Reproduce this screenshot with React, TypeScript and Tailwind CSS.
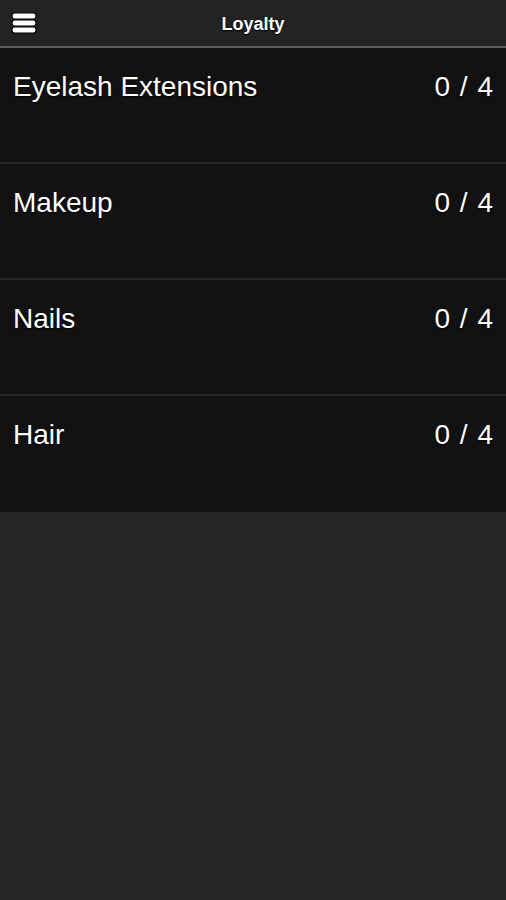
import React from 'react';

interface LoyaltyItem {
  name: string;
  count: number;
  total: number;
}

const items: LoyaltyItem[] = [
  { name: 'Eyelash Extensions', count: 0, total: 4 },
  { name: 'Makeup', count: 0, total: 4 },
  { name: 'Nails', count: 0, total: 4 },
  { name: 'Hair', count: 0, total: 4 },
];

const MenuIcon: React.FC = () => (
  <svg width="26" height="22" viewBox="0 0 26 22">
    {[1, 8, 15].map((y) => (
      <rect key={y} x="1" y={y} width="24" height="6" rx="2.5" fill="#fff" stroke="#000" strokeWidth="1.2" />
    ))}
  </svg>
);

const App: React.FC = () => {
  return (
    <div className="min-h-screen bg-[#252525] font-['Liberation_Sans',Arial,sans-serif] text-white">
      <header className="relative flex h-[48px] items-center justify-center border-b-2 border-[#5e5e5e] bg-[#232323]">
        <button className="absolute left-[11px] top-[12px]">
          <MenuIcon />
        </button>
        <h1 className="mt-[3px] text-[18px] font-bold [text-shadow:0_0_2px_#000,0_1px_1px_#000]">Loyalty</h1>
      </header>

      <div>
        {items.map((item, i) => (
          <div
            key={item.name}
            className={`flex h-[116px] items-start justify-between bg-[#121212] px-[13px] pt-[23px] ${
              i < items.length - 1 ? 'border-b-2 border-[#272727]' : ''
            }`}
          >
            <span className="text-[28px] leading-[32px] [text-shadow:0_1px_2px_#000]">{item.name}</span>
            <span className="text-[28px] leading-[32px] [word-spacing:2px] [text-shadow:0_1px_2px_#000]">
              {item.count} / {item.total}
            </span>
          </div>
        ))}
      </div>
    </div>
  );
};

export default App;
